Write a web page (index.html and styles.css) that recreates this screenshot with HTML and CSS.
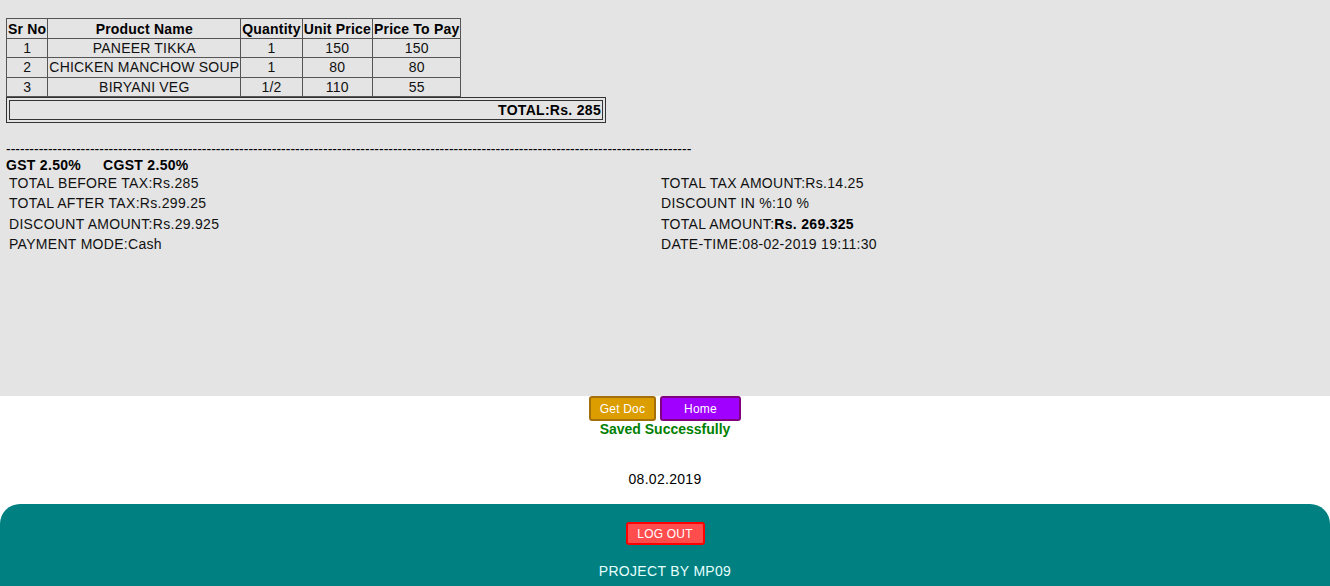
FILE: index.html
```html
<!DOCTYPE html>
<html>
<head>
<meta charset="utf-8">
<title>Bill</title>
<link rel="stylesheet" href="styles.css">
</head>
<body>
<div class="sheet">
  <table class="items">
    <tr><th>Sr No</th><th>Product Name</th><th>Quantity</th><th>Unit Price</th><th>Price To Pay</th></tr>
    <tr><td>1</td><td>PANEER TIKKA</td><td>1</td><td>150</td><td>150</td></tr>
    <tr><td>2</td><td>CHICKEN MANCHOW SOUP</td><td>1</td><td>80</td><td>80</td></tr>
    <tr><td>3</td><td>BIRYANI VEG</td><td>1/2</td><td>110</td><td>55</td></tr>
  </table>
  <table class="total">
    <tr><td>TOTAL:Rs. 285</td></tr>
  </table>
  <div class="dashes">---------------------------------------------------------------------------------------------------------------------------------------------------</div>
  <div class="gst"><span class="gst-item">GST 2.50%</span><span>CGST 2.50%</span></div>
  <div class="info">
    <div>TOTAL BEFORE TAX:Rs.285</div>
    <div>TOTAL TAX AMOUNT:Rs.14.25</div>
    <div>TOTAL AFTER TAX:Rs.299.25</div>
    <div>DISCOUNT IN %:10 %</div>
    <div>DISCOUNT AMOUNT:Rs.29.925</div>
    <div>TOTAL AMOUNT:<b>Rs. 269.325</b></div>
    <div>PAYMENT MODE:Cash</div>
    <div>DATE-TIME:08-02-2019 19:11:30</div>
  </div>
</div>
<div class="actions">
  <div class="buttons">
    <button class="btn btn-doc">Get Doc</button>
    <button class="btn btn-home">Home</button>
  </div>
  <div class="saved">Saved Successfully</div>
  <div class="date">08.02.2019</div>
</div>
<footer class="footer">
  <button class="btn btn-logout">LOG OUT</button>
  <div class="credit">PROJECT BY MP09</div>
</footer>
</body>
</html>
```

FILE: styles.css
```css
html, body {
  margin: 0;
  padding: 0;
}
body {
  font-family: "Liberation Sans", Arial, sans-serif;
  font-size: 14px;
  letter-spacing: 0.3px;
  color: #111;
  background: #fff;
  overflow: hidden;
}
.sheet {
  background: #e4e4e4;
  height: 396px;
  box-sizing: border-box;
  padding: 18px 6px 0 6px;
}
.items {
  border-collapse: collapse;
  border: 1px solid #444;
  letter-spacing: 0.2px;
}
.items th, .items td {
  border: 1px solid #555;
  padding: 1px 1px;
  line-height: 16.5px;
  text-align: center;
  white-space: nowrap;
}
.items th {
  font-weight: bold;
  color: #000;
  padding-top: 2px;
  padding-bottom: 0;
}
.total {
  width: 600px;
  border: 1px solid #333;
  border-spacing: 2px;
}
.total td {
  border: 1px solid #333;
  padding: 2px 1px 1px 1px;
  line-height: 15px;
  text-align: right;
  font-weight: bold;
  color: #000;
}
.dashes {
  margin-top: 18px;
  line-height: 16px;
  white-space: nowrap;
  letter-spacing: 0;
  color: #000;
}
.gst {
  line-height: 16px;
  font-weight: bold;
  color: #000;
}
.gst-item {
  margin-right: 22px;
}
.info {
  display: grid;
  grid-template-columns: 652px 1fr;
  padding-left: 3px;
  margin-top: 0;
  line-height: 20.33px;
}
.info b {
  color: #000;
}
.actions {
  display: flex;
  flex-direction: column;
  align-items: center;
  height: 108px;
}
.buttons {
  display: flex;
  gap: 4px;
}
.btn {
  font-family: "Liberation Sans", Arial, sans-serif;
  font-size: 12px;
  letter-spacing: 0.2px;
  color: #fff;
  border-radius: 3px;
  border: 2px solid;
  padding: 0;
  display: inline-flex;
  align-items: center;
  justify-content: center;
  box-sizing: border-box;
}
.btn-doc {
  width: 67px;
  height: 25px;
  background: #dc9d00;
  border-color: #a4700c;
}
.btn-home {
  width: 81px;
  height: 25px;
  background: #a000ff;
  border-color: #800080;
}
.saved {
  line-height: 16px;
  font-weight: bold;
  color: #008000;
  letter-spacing: 0;
}
.date {
  margin-top: 34px;
  line-height: 16px;
  color: #000;
}
.footer {
  background: #008080;
  border-radius: 20px 20px 0 0;
  height: 82px;
  box-sizing: border-box;
  padding-top: 18px;
  display: flex;
  flex-direction: column;
  align-items: center;
}
.btn-logout {
  width: 79px;
  height: 23px;
  background: #ff4d4d;
  border-color: #ff0000;
}
.credit {
  margin-top: 18px;
  line-height: 16px;
  color: #e6ffff;
}
```
